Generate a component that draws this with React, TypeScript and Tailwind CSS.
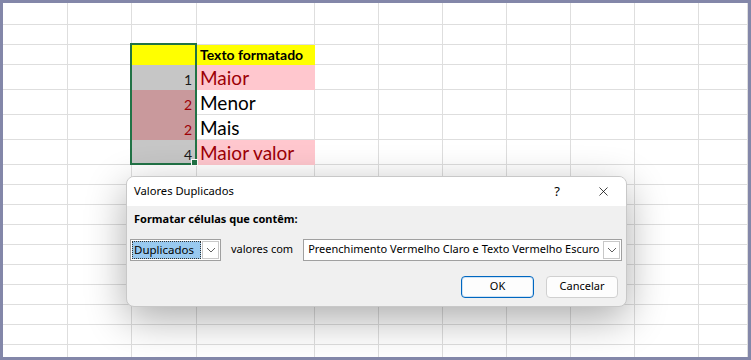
import { X } from "lucide-react";

const colWidths = [65, 64, 65, 118, 64, 64, 64, 64, 64, 64, 49];
const rowHeights = [22, 20, 20, 25, 25, 25, 25, 20, 20, 20, 20, 20, 20, 20, 20, 20, 21, 12];

type Cell = { text?: string; bg?: string; cls?: string };

// cells with content, keyed "row-col"; filled cells hide their gridlines
const cells: Record<string, Cell> = {
  "2-2": { bg: "bg-[#ffff00] border-[#ffff00]" },
  "2-3": { bg: "bg-[#ffff00] border-[#ffff00]", text: "Texto formatado", cls: "font-bold text-[14px] text-black pl-[3px]" },
  "3-2": { bg: "bg-[#c6c6c6] border-[#c6c6c6]", text: "1", cls: "justify-end text-[14px] text-[#1a1a1a] pr-[4px]" },
  "3-3": { bg: "bg-[#ffc7ce] border-[#ffc7ce]", text: "Maior", cls: "text-[19px] text-[#9c0006] pl-[3px]" },
  "4-2": { bg: "bg-[#c9999c] border-[#c9999c]", text: "2", cls: "justify-end text-[14px] text-[#9c0006] pr-[4px]" },
  "4-3": { text: "Menor", cls: "text-[19px] text-black pl-[3px]" },
  "5-2": { bg: "bg-[#c9999c] border-[#c9999c]", text: "2", cls: "justify-end text-[14px] text-[#9c0006] pr-[4px]" },
  "5-3": { text: "Mais", cls: "text-[19px] text-black pl-[3px]" },
  "6-2": { bg: "bg-[#c6c6c6] border-[#c6c6c6]", text: "4", cls: "justify-end text-[14px] text-[#1a1a1a] pr-[4px]" },
  "6-3": { bg: "bg-[#ffc7ce] border-[#ffc7ce]", text: "Maior valor", cls: "text-[19px] text-[#9c0006] pl-[3px]" },
};

const Chevron = () => (
  <svg width="10" height="6" viewBox="0 0 10 6" fill="none">
    <path d="M1 1l4 4 4-4" stroke="#606060" strokeWidth="1" />
  </svg>
);

const App = () => {
  return (
    <div className="relative h-[360px] w-[751px] overflow-hidden border-[3px] border-[#8387a9] bg-white font-['Lato',sans-serif]">
      {/* Sheet grid */}
      <div
        className="grid"
        style={{
          gridTemplateColumns: colWidths.map((w) => `${w}px`).join(" "),
          gridTemplateRows: rowHeights.map((h) => `${h}px`).join(" "),
        }}
      >
        {rowHeights.map((_, r) =>
          colWidths.map((_, c) => {
            const cell = cells[`${r}-${c}`];
            return (
              <div
                key={`${r}-${c}`}
                className={`flex items-end overflow-visible whitespace-nowrap border-b border-r leading-none ${
                  cell?.bg ?? "border-[#dedede] bg-white"
                } ${cell?.cls ?? ""}`}
              >
                {cell?.text && <span className="pb-[2px]">{cell.text}</span>}
              </div>
            );
          })
        )}
      </div>

      {/* Selection */}
      <div className="absolute left-[127px] top-[40px] h-[122px] w-[67px] border-2 border-[#217346]" />
      <div className="absolute left-[188px] top-[156px] h-[7px] w-[7px] border border-white bg-[#217346]" />

      {/* Dialog */}
      <div className="absolute left-[123px] top-[173px] flex h-[131px] w-[501px] flex-col overflow-hidden whitespace-nowrap rounded-[8px] border border-[#c8c8c8] bg-[#f0f0f0] font-['Noto_Sans',sans-serif] text-[11px] text-black shadow-[0_12px_40px_rgba(0,0,0,0.33)]">
        <div className="flex h-[29px] shrink-0 items-center bg-white pl-[7px]">
          <span className="flex-1 text-[11.2px]">Valores Duplicados</span>
          <span className="w-[46px] text-center text-[13px]">?</span>
          <span className="flex w-[46px] items-center justify-center">
            <X size={15} strokeWidth={1.2} />
          </span>
        </div>
        <div className="flex flex-1 flex-col px-[3px]">
          <div className="pl-[4px] pt-[5px] font-bold">Formatar células que contêm:</div>
          <div className="mt-[11px] flex items-center">
            <div className="flex h-[22px] w-[91px] shrink-0 items-center border border-[#a0a0a0] bg-white p-[1px]">
              <span className="flex h-full flex-1 items-center border border-dotted border-[#333] bg-[#99c9ef] pl-[1px] text-[11.5px]">
                Duplicados
              </span>
              <span className="ml-[1px] flex h-full w-[17px] items-center justify-center border border-[#c8c8c8]">
                <Chevron />
              </span>
            </div>
            <span className="ml-[10px] shrink-0">valores com</span>
            <div className="ml-[10px] flex h-[22px] w-[319px] shrink-0 items-center border border-[#a0a0a0] bg-white pl-[4px] pr-[1px]">
              <span className="flex-1">Preenchimento Vermelho Claro e Texto Vermelho Escuro</span>
              <span className="flex h-[18px] w-[17px] items-center justify-center border border-[#c8c8c8]">
                <Chevron />
              </span>
            </div>
          </div>
          <div className="mt-[15px] flex justify-end gap-[12px] pr-[5px]">
            <button className="h-[22px] w-[73px] rounded-[4px] border border-[#0067c0] bg-[#fdfdfd] shadow-[inset_0_0_0_1px_#cfe3f5]">
              OK
            </button>
            <button className="h-[22px] w-[72px] rounded-[4px] border border-[#d0d0d0] bg-[#fdfdfd]">
              Cancelar
            </button>
          </div>
        </div>
      </div>
    </div>
  );
};

export default App;
